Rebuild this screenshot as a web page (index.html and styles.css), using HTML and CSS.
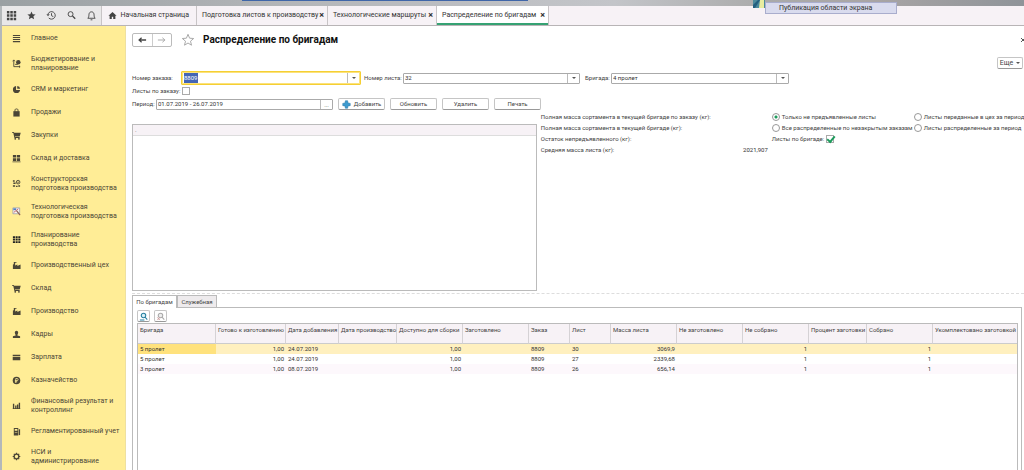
FILE: index.html
```html
<!DOCTYPE html>
<html lang="ru">
<head>
<meta charset="utf-8">
<title>Распределение по бригадам</title>
<link rel="stylesheet" href="styles.css">
</head>
<body>
<div class="desktop"><span class="desktop-bar"></span>
  <div class="share"><svg class="share-icon" viewBox="0 0 12 8"><path fill="#4c8a9c" d="M0 0h12v8H0z"/><path fill="#e8eda0" d="M7 0h4v8H6z"/><path fill="#235f80" d="M0 5 5 0h2L2 8H0z"/></svg><span class="share-text">Публикация области экрана</span></div>
</div>
<div class="app">
  <header class="topbar">
    <div class="tools">
      <button class="tool" aria-label="Меню"><svg viewBox="0 0 12 12"><path d="M1 1h2.700v2.700H1zM4.700 1h2.700v2.700H4.700zM8.400 1h2.700v2.700H8.400zM1 4.700h2.700v2.700H1zM4.700 4.700h2.700v2.700H4.700zM8.400 4.700h2.700v2.700H8.400zM1 8.400h2.700v2.700H1zM4.700 8.400h2.700v2.700H4.700zM8.400 8.400h2.700v2.700H8.400z"/></svg></button>
      <button class="tool" aria-label="Избранное"><svg viewBox="0 0 12 12"><path d="m6 1.500 1.300 3 3.200.3-2.400 2.100.7 3.200L6 8.400l-2.800 1.700.7-3.200L1.500 4.800l3.200-.3z"/></svg></button>
      <button class="tool" aria-label="История"><svg viewBox="0 0 12 12"><path class="line" d="M2.200 4.300A4.100 4.100 0 1 1 3 8.700M6 3.500v2.700l2 1"/><path d="M.5 4.500h3.500L2.200 6.800z"/></svg></button>
      <button class="tool" aria-label="Поиск"><svg viewBox="0 0 12 12"><circle class="line" cx="5" cy="4.500" r="2.700"/><path d="m6.600 7 1-1 3 3-1 1.100z"/></svg></button>
      <button class="tool" aria-label="Уведомления"><svg viewBox="0 0 12 12"><path class="line" d="M2 9h8C8.500 7.500 9 6 8.700 4.500 8.500 3 7.500 2 6 2S3.500 3 3.300 4.500C3 6 3.500 7.500 2 9zM5 10.700h2"/></svg></button>
    </div>
    <nav class="tabs">
      <a class="tab tab-home" href="#"><svg class="home" viewBox="0 0 10 10"><path d="M5 1 .5 5.300h1.300V9h2.400V6.500h1.600V9h2.400V5.300h1.300z"/></svg>Начальная страница</a>
      <a class="tab tab-sheets" href="#">Подготовка листов к производству<b>×</b></a>
      <a class="tab tab-routes" href="#">Технологические маршруты<b>×</b></a>
      <a class="tab tab-active" href="#">Распределение по бригадам<b>×</b></a>
    </nav>
  </header>
  <div class="body">
    <nav class="side">
      <a class="item" href="#"><svg viewBox="0 0 10 10"><path d="M1 1h8v1.200H1zM1 3.300h8v1.200H1zM1 5.600h8v1.200H1zM1 7.900h8v1.200H1z"/></svg><span>Главное</span></a>
      <a class="item tall" href="#"><svg viewBox="0 0 10 10"><path class="line" d="M2 1.500v7h7M.8 2.500 2 1l1.200 1.500M7.800 7.500 9 8.500l-1.200 1M3.500 6h3"/><circle cx="7" cy="3.500" r="2.500"/></svg><span>Бюджетирование и<br>планирование</span></a>
      <a class="item" href="#"><svg viewBox="0 0 10 10"><path d="M4.500 1v4.500H9A4 4 0 1 1 4.500 1z"/><path d="M5.800 1A3.500 3.500 0 0 1 9 4.200H5.800z"/></svg><span>CRM и маркетинг</span></a>
      <a class="item" href="#"><svg viewBox="0 0 10 10"><path d="M1.500 3.500h7V9.500h-7z"/><path class="line" d="M3.300 4V2c0-1.300 3.400-1.300 3.400 0v2"/></svg><span>Продажи</span></a>
      <a class="item" href="#"><svg viewBox="0 0 10 10"><path d="M0 1h2l.5 1h7.200L8.500 6H3.300l.2.700h5v1H2.700L1.400 2H0z"/><circle cx="3.600" cy="8.700" r="1"/><circle cx="7.700" cy="8.700" r="1"/></svg><span>Закупки</span></a>
      <a class="item" href="#"><svg viewBox="0 0 10 10"><path d="M1 1h3.600v3H1zM5.400 1H9v3H5.400zM1 4.800h3.600v3H1zM5.400 4.800H9v3H5.400zM.5 8.300h9v1h-9z"/></svg><span>Склад и доставка</span></a>
      <a class="item tall" href="#"><svg viewBox="0 0 10 10"><path d="M1 1.500h2v1.500H1zM1.500 4h2.500v1.500H1.500zM1 7h2.500v1.500H1zM4.500 7.500h1.700V9H4.500zM7 7h2v1.500H7z"/><circle class="line" cx="6.800" cy="3.500" r="2"/><circle cx="6.800" cy="3.500" r=".8"/></svg><span>Конструкторская<br>подготовка производства</span></a>
      <a class="item tall" href="#"><svg viewBox="0 0 10 10"><path fill="#f7f4ef" stroke="#8189a5" stroke-width=".7" d="M1 1h7.500v6.500H1z"/><path fill="#4b7fc5" d="M1.500 1.500h3v2h-3z"/><path stroke="#cb5964" stroke-width="1" d="m2 6 5-4"/><path stroke="#8b6050" stroke-width="1.300" d="m5 4 4 5"/></svg><span>Технологическая<br>подготовка производства</span></a>
      <a class="item tall" href="#"><svg viewBox="0 0 10 10"><path fill="#222" d="M1 1.500h2.300v2H1zM4 1.500h2.300v2H4zM7 1.500h2.300v2H7zM1 4.200h2.300v2H1zM4 4.200h2.300v2H4zM7 4.200h2.300v2H7zM1 6.900h2.300v2H1zM4 6.900h2.300v2H4zM7 6.900h2.300v2H7z"/></svg><span>Планирование<br>производства</span></a>
      <a class="item" href="#"><svg viewBox="0 0 10 10"><path d="M1 9V4l1-.5V1h3v1H3.500v3L6 3.800V5.500L9.500 4v5z"/></svg><span>Производственный цех</span></a>
      <a class="item" href="#"><svg viewBox="0 0 10 10"><path d="M0 1h2l.5 1h7.200L8.500 6H3.300l.2.700h5v1H2.700L1.400 2H0z"/><circle cx="3.600" cy="8.700" r="1"/><circle cx="7.700" cy="8.700" r="1"/></svg><span>Склад</span></a>
      <a class="item" href="#"><svg viewBox="0 0 10 10"><path d="M1 9V4l1-.5V1h3v1H3.500v3L6 3.800V5.500L9.500 4v5z"/></svg><span>Производство</span></a>
      <a class="item" href="#"><svg viewBox="0 0 10 10"><ellipse cx="5" cy="3" rx="1.900" ry="2.300"/><path d="M4 4.500h2V6l3 1v2H1V7l3-1z"/></svg><span>Кадры</span></a>
      <a class="item" href="#"><svg viewBox="0 0 10 10"><path d="M.8 2h8.400v1.300H.8zM.8 4.300h8.400V8H.8z"/></svg><span>Зарплата</span></a>
      <a class="item" href="#"><svg viewBox="0 0 10 10"><circle cx="5" cy="5" r="4.200"/><path fill="none" stroke="#ffed96" stroke-width=".9" d="M4.200 7.800V2.800h1.500c1.500 0 1.500 2.300 0 2.300H3.200M3.200 6.400h2.600"/></svg><span>Казначейство</span></a>
      <a class="item tall" href="#"><svg viewBox="0 0 10 10"><path d="M1 3h1.500v5H1zM3.500 5H5v3H3.500zM5.500 4H7v4H5.500zM7.500 2H9v6H7.500zM.8 8h8.400v1H.8z"/></svg><span>Финансовый результат и<br>контроллинг</span></a>
      <a class="item" href="#"><svg viewBox="0 0 10 10"><path fill-rule="evenodd" d="M2 1h5v8.500H2zM3 2.300v2h3v-2zM3 5.500v.7h3v-.7z"/><path d="M7.500 2.500H9v6.500H7.500z"/></svg><span>Регламентированный учет</span></a>
      <a class="item tall" href="#"><svg viewBox="0 0 10 10"><circle cx="5" cy="5" r="2.600" fill="none" stroke="#4b4636" stroke-width="1.500"/><path fill="none" stroke="#4b4636" stroke-width="1.300" d="M5 .8v1.500M5 7.700v1.500M.8 5h1.500M7.700 5h1.500M2 2l1 1M7 7l1 1M2 8l1-1M7 3l1-1"/></svg><span>НСИ и<br>администрирование</span></a>
    </nav>
    <main class="main">
      <div class="heading">
        <div class="history"><button aria-label="Назад"><svg viewBox="0 0 10 8"><path d="M1 4h8M4 1.500 1.200 4 4 6.500" stroke="#444" stroke-width="1.400" fill="none"/></svg></button><button aria-label="Вперед"><svg viewBox="0 0 10 8"><path d="M1 4h8M6 1.500 8.800 4 6 6.500" stroke="#aaa" stroke-width="1.100" fill="none"/></svg></button></div>
        <svg class="fav" viewBox="0 0 14 14"><path d="m7 1.300 1.600 3.900 4.100.3-3.200 2.700 1 4L7 10l-3.500 2.200 1-4-3.200-2.700 4.100-.3z"/></svg>
        <h1>Распределение по бригадам</h1>
        <button class="close" aria-label="Закрыть"><svg viewBox="0 0 3 6"><path d="m0 1 4 4M0 5l4-4" stroke="#555" fill="none"/></svg></button>
      </div>
      <div class="more-row"><button class="btn more">Еще <i class="arrow"></i></button></div>
      <form class="form">
        <div class="row row-main">
          <label class="l-order" for="order">Номер заказа:</label>
          <div class="combo focused"><input id="order" value="8809"><button type="button" aria-label="Выбрать заказ"><i class="arrow"></i></button></div>
          <label class="l-sheet" for="sheet">Номер листа:</label>
          <div class="combo c-sheet"><input id="sheet" value="32"><button type="button" aria-label="Выбрать лист"><i class="arrow"></i></button></div>
          <label class="l-team" for="team">Бригада:</label>
          <div class="combo c-team"><input id="team" value="4 пролет"><button type="button" aria-label="Выбрать бригаду"><i class="arrow"></i></button></div>
        </div>
        <div class="row row-check"><label for="byorder">Листы по заказу:</label><input class="check" type="checkbox" id="byorder"></div>
        <div class="row row-period">
          <label for="period">Период:</label>
          <div class="combo c-period"><input id="period" value="01.07.2019 - 26.07.2019"><button type="button">...</button></div>
          <button type="button" class="btn act"><svg viewBox="0 0 8 8"><path fill="#3d9bd0" stroke="#2878a8" stroke-width=".5" d="M3 .7h2L5.300 2.700 7.300 3v2L5.300 5.300 5 7.300H3L2.700 5.300.7 5V3L2.700 2.700z"/></svg>Добавить</button>
          <button type="button" class="btn act">Обновить</button>
          <button type="button" class="btn act">Удалить</button>
          <button type="button" class="btn act">Печать</button>
        </div>
      </form>
      <div class="split">
        <section class="list"><div class="list-head">.</div></section>
        <section class="info">
          <dl class="totals">
            <dt>Полная масса сортамента в текущей бригаде по заказу (кг):</dt><dd></dd>
            <dt>Полная масса сортамента в текущей бригаде (кг):</dt><dd></dd>
            <dt>Остаток непредъявленного (кг):</dt><dd></dd>
            <dt>Средняя масса листа (кг):</dt><dd>2021,907</dd>
          </dl>
          <div class="options">
            <label><input type="radio" name="mode" checked>Только не предъявленные листы</label>
            <label><input type="radio" name="mode">Листы переданные в цех за период</label>
            <label><input type="radio" name="mode">Все распределенные по незакрытым заказам</label>
            <label><input type="radio" name="mode">Листы распределенные за период</label>
            <label class="byteam">Листы по бригаде:<input class="check" type="checkbox" checked></label>
          </div>
        </section>
      </div>
      <div class="pages">
        <div class="page-tabs"><button class="page-tab on">По бригадам</button><button class="page-tab">Служебная</button></div>
        <div class="page">
          <div class="page-tools">
            <button class="btn mini" aria-label="Найти"><svg viewBox="0 0 10 10"><circle cx="5" cy="3.800" r="2.500" fill="#d9f0f7" stroke="#267fa0" stroke-width="1.200"/><path d="m6.700 5.700 2.500 2.700M1 8.800h5" stroke="#267fa0" stroke-width="1.200"/></svg></button>
            <button class="btn mini" aria-label="Отменить поиск"><svg viewBox="0 0 10 10"><circle cx="5" cy="3.800" r="2.500" fill="#eee" stroke="#aaa" stroke-width="1.200"/><path d="m6.700 5.700 2.500 2.700" stroke="#aaa" stroke-width="1.200"/><path d="m1.500 6 2.800 3M4.300 6 1.500 9" stroke="#c99" stroke-width="1"/></svg></button>
          </div>
          <div class="table-box">
          <table>
            <colgroup><col class="w78"><col class="w70"><col class="w53"><col class="w58"><col class="w66"><col class="w66"><col class="w41"><col class="w41"><col class="w66"><col class="w66"><col class="w66"><col class="w58"><col class="w66"><col></colgroup>
            <thead><tr><th>Бригада</th><th>Готово к изготовлению</th><th>Дата добавления</th><th>Дата производство</th><th>Доступно для сборки</th><th>Заготовлено</th><th>Заказ</th><th>Лист</th><th>Масса листа</th><th>Не заготовлено</th><th>Не собрано</th><th>Процент заготовки</th><th>Собрано</th><th>Укомплектовано заготовкой</th></tr></thead>
            <tbody>
              <tr class="current"><td>5 пролет</td><td class="n">1,00</td><td>24.07.2019</td><td></td><td class="n">1,00</td><td></td><td>8809</td><td>30</td><td class="n">3069,9</td><td></td><td class="n">1</td><td></td><td class="n">1</td><td></td></tr>
              <tr><td>5 пролет</td><td class="n">1,00</td><td>24.07.2019</td><td></td><td class="n">1,00</td><td></td><td>8809</td><td>27</td><td class="n">2339,68</td><td></td><td class="n">1</td><td></td><td class="n">1</td><td></td></tr>
              <tr><td>3 пролет</td><td class="n">1,00</td><td>08.07.2019</td><td></td><td class="n">1,00</td><td></td><td>8809</td><td>26</td><td class="n">656,14</td><td></td><td class="n">1</td><td></td><td class="n">1</td><td></td></tr>
            </tbody>
          </table>
          </div>
        </div>
      </div>
    </main>
  </div>
</div>
<script src="app.js"></script>
</body>
</html>
```
FILE: app.js
```js
const order = document.getElementById("order");
order.focus();
order.select();
```
FILE: styles.css
```css
* { box-sizing: border-box; }
body { margin: 0; height: 100vh; display: flex; flex-direction: column; overflow: hidden; background: #fff; color: #444; font: 6px/10px Roboto, sans-serif; }
button, input { font: inherit; color: inherit; margin: 0; padding: 0; border: 0; background: none; }
a { color: inherit; text-decoration: none; }
svg { flex: none; display: block; }
.line { fill: none; stroke: currentColor; stroke-width: 1; }

.desktop { position: relative; height: 6px; flex: none; background: linear-gradient(90deg, #9aa0a3, #b5b7ba 30%, #c3c5c9 60%, #aaa 75%, #a9a5a5 85%, #8f9499); }
.desktop-bar { display: block; width: 28%; height: 1px; margin-left: 23.6%; background: #3f66a8; }
.share { position: absolute; z-index: 2; top: 0; left: 753px; display: flex; align-items: flex-start; }
.share-icon { width: 12px; height: 8px; }
.share-text { width: 132px; height: 12px; margin-top: 2px; padding-left: 13px; border: 1px solid #a9adcd; background: #d9dbee; color: #333; font-size: 7px; white-space: nowrap; }

.app { flex: 1; min-height: 0; display: flex; flex-direction: column; border-left: 2px solid #b4b8ba; }
.topbar { flex: none; height: 20px; display: flex; background: #f7f2f6; border-bottom: 1px solid #b8b4b6; font-size: 7px; line-height: 19px; }
.tools { display: flex; width: 100px; background: #e9e8e9; border-right: 1px solid #c8c4c6; }
.tool { width: 20px; display: grid; place-items: center; color: #444; }
.tool svg { width: 11px; height: 11px; fill: #444; }
.tabs { display: flex; }
.tab { display: flex; align-items: center; justify-content: space-between; padding: 0 3px 0 5px; border-right: 1px solid #c8c4c6; white-space: nowrap; color: #333; }
.tab b { font-size: 9px; color: #333; }
.tab-home { width: 95px; padding: 0 7px 0 6px; }
.home { width: 9px; height: 9px; fill: #444; }
.tab-sheets { width: 131px; }
.tab-routes { width: 109px; }
.tab-active { width: 112px; background: #fff; box-shadow: inset 0 -2px #36a273; }

.body { flex: 1; min-height: 0; display: flex; }
.side { flex: none; width: 124px; background: #ffed96; border-right: 1px solid #eee0a0; color: #4b4636; font-size: 7px; line-height: 9px; }
.item { display: flex; align-items: center; height: 23px; padding: 1px 0 0 10px; gap: 10px; white-space: nowrap; }
.item.tall { height: 28px; }
.item svg { width: 9px; height: 9px; fill: #4b4636; }

.main { flex: 1; min-width: 0; display: flex; flex-direction: column; padding: 6px 0 0 6px; overflow: hidden; }
.heading { display: flex; align-items: center; height: 15px; }
.history { display: flex; width: 40px; height: 14px; border: 1px solid #bbb; border-radius: 2px; }
.history button { flex: 1; display: grid; place-items: center; }
.history button + button { border-left: 1px solid #ccc; }
.history svg { width: 9px; height: 8px; }
.fav { width: 14px; height: 14px; margin: 0 8px 0 9px; fill: #fff; stroke: #aaa; stroke-width: 1; }
h1 { margin: 0; font-size: 10px; line-height: 14px; color: #111; }
.close { margin-left: auto; }
.close svg { width: 3px; height: 6px; }
.more-row { display: flex; justify-content: flex-end; padding: 10px 1px 0 0; height: 24px; }
.btn { display: flex; align-items: center; justify-content: center; height: 12px; border: 1px solid #c5c5c5; border-bottom-color: #999; border-radius: 2px; background: #fff; white-space: nowrap; }
.more { width: 26px; gap: 3px; font-size: 7px; }
.arrow { display: block; border: 2px solid transparent; border-top: 2px solid #555; border-bottom: 0; }
.row { display: flex; align-items: center; }
.row label { white-space: nowrap; }
.row-main { height: 14px; }
.l-order { width: 49px; }
.l-sheet { width: 42px; padding-left: 3px; }
.l-team { width: 31px; padding-left: 5px; }
.combo { display: flex; height: 11px; border: 1px solid #aaa; border-radius: 1px; background: #fff; color: #333; }
.combo input { flex: 1; min-width: 0; padding-left: 1px; outline: 0; }
.combo input::selection { background: #4465b5; color: #fff; }
.combo button { width: 12px; display: grid; place-items: center; border-left: 1px solid #bbb; }
.combo.focused { width: 180px; height: 14px; border: 1px solid #f5cf33; box-shadow: inset 0 0 0 1px #fbe27c; padding: 1px; }
.c-sheet { width: 177px; }
.c-team { width: 178px; }
.row-check { height: 12px; gap: 2px; }
.row-period { height: 14px; gap: 5px; }
.row-period label { width: 19px; }
.c-period { width: 177px; }
.act { width: 47px; gap: 3px; }
.act svg { width: 9px; height: 9px; }
.check { flex: none; appearance: none; width: 8px; height: 8px; border: 1px solid #aaa; background: #fff; display: grid; place-items: center; }
.check:checked::after { content: ""; width: 6px; height: 3px; border: solid #1d9b5c; border-width: 0 0 2px 2px; transform: rotate(-50deg); }

.split { display: flex; height: 183px; padding-bottom: 2px; border-bottom: 1px dashed #ddd; }
.list { flex: 406; margin-top: 13px; border: 1px solid #bbb; }
.list-head { height: 11px; padding-left: 2px; background: #f7f2f6; border-bottom: 1px solid #ddd; }
.info { flex: 487; min-width: 0; display: flex; line-height: 11px; padding-left: 4px; }
.totals { flex: none; width: 227px; display: grid; grid-template-columns: auto 1fr; align-content: start; margin: 0; white-space: nowrap; }
.totals dd { margin: 0; text-align: right; color: #333; }
.options { flex: 1; min-width: 0; display: grid; grid-template-columns: 142px 1fr; grid-auto-rows: 11px; padding-left: 4px; white-space: nowrap; }
.options label { display: flex; align-items: center; gap: 2px; }
.options input[type="radio"] { flex: none; appearance: none; width: 8px; height: 8px; border: 1px solid #999; border-radius: 50%; background: #fff; }
.options input[type="radio"]:checked { background: radial-gradient(circle, #1d9b5c 0 1px, #fff 2px); }

.pages { flex: 1; min-height: 0; display: flex; flex-direction: column; padding: 1px 2px 0 0; }
.page-tabs { display: flex; height: 12px; }
.page-tab { width: 40px; border: 1px solid #bbb; border-bottom: 0; background: #eeebed; }
.page-tab.on { width: 45px; height: 13px; z-index: 1; background: #fff; }
.page { flex: 1; min-height: 0; display: flex; flex-direction: column; border: 1px solid #bbb; border-bottom: 0; padding: 2px 3px 0 4px; }
.page-tools { display: flex; gap: 4px; height: 13px; }
.mini { width: 13px; }
.mini svg { width: 9px; height: 9px; }
.table-box { flex: 1; border: 1px solid #bbb; border-bottom: 0; }
table { width: 100%; table-layout: fixed; border-collapse: separate; border-spacing: 0; }
th { height: 20px; padding: 1px 0 0 2px; text-align: left; vertical-align: top; font-weight: normal; background: #f7f2f6; border-right: 1px solid #d5d2d5; border-bottom: 1px solid #ccc; white-space: nowrap; }
th:last-child { border-right: 0; }
td { height: 10px; padding: 0 2px; white-space: nowrap; color: #333; }
tr:nth-child(3) td { background: #fdf8fc; }
.current td { background: #fff0bf; }
.current td:first-child { background: #ffe27d; }
.n { text-align: right; }
.w41 { width: 41px; } .w53 { width: 53px; } .w58 { width: 58px; } .w66 { width: 66px; } .w70 { width: 70px; } .w78 { width: 78px; }
```
